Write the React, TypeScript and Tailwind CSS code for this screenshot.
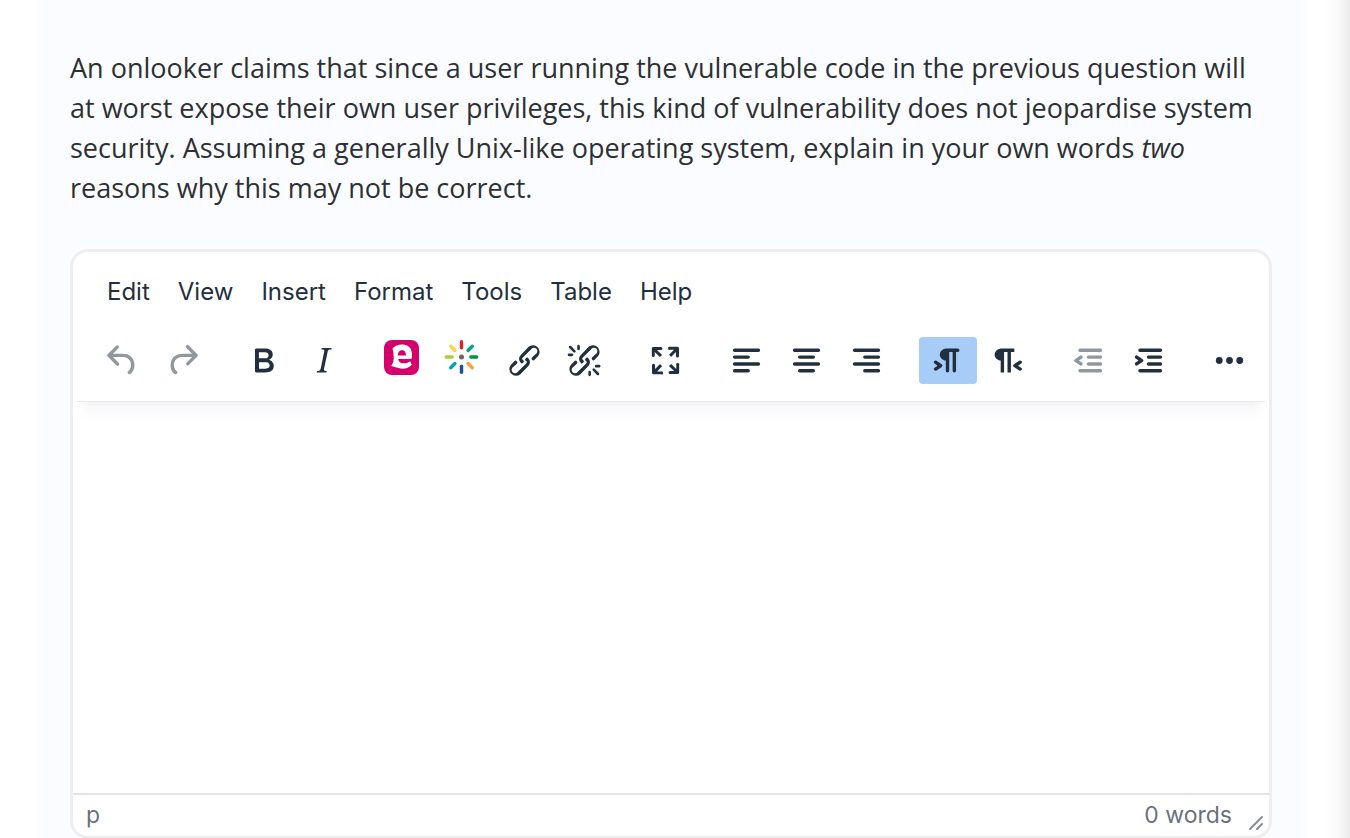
import type { ReactNode } from "react";

const BAR = "M5 5h14a1 1 0 0 1 0 2H5a1 1 0 1 1 0-2Z";
const LINK =
  "M6.2 12.3a1 1 0 0 1 1.4 1.4l-2 2a2 2 0 1 0 2.6 2.8l4.8-4.8a1 1 0 0 0 0-1.4 1 1 0 1 1 1.4-1.3 2.9 2.9 0 0 1 0 4L9.6 20a3.9 3.9 0 0 1-5.5-5.5l2-2Zm11.6-.6a1 1 0 0 1-1.4-1.4l2-2a2 2 0 1 0-2.6-2.8L11 10.3a1 1 0 0 0 0 1.4A1 1 0 1 1 9.6 13a2.9 2.9 0 0 1 0-4L14.4 4a3.9 3.9 0 0 1 5.5 5.5l-2 2Z";
const INDENT_BARS =
  "M7 5h12a1 1 0 0 1 0 2H7a1 1 0 1 1 0-2Zm5 4h7a1 1 0 0 1 0 2h-7a1 1 0 0 1 0-2Zm0 4h7a1 1 0 0 1 0 2h-7a1 1 0 0 1 0-2Zm-5 4h12a1 1 0 0 1 0 2H7a1 1 0 0 1 0-2Z";

const paths = {
  undo: "M6.4 8H12c3.7 0 6.2 2 6.8 5.1.6 2.7-.4 5.6-2.3 6.8a1 1 0 0 1-1-1.8c1.1-.6 1.8-2.7 1.4-4.6-.5-2.1-2.1-3.5-4.9-3.5H6.4l3.3 3.3a1 1 0 1 1-1.4 1.4l-5-5a1 1 0 0 1 0-1.4l5-5a1 1 0 0 1 1.4 1.4L6.4 8Z",
  redo: "M17.6 10H12c-2.8 0-4.4 1.4-4.9 3.5-.4 2 .3 4 1.4 4.6a1 1 0 1 1-1 1.8c-2-1.2-2.9-4.1-2.3-6.8.6-3 3-5.1 6.8-5.1h5.6l-3.3-3.3a1 1 0 1 1 1.4-1.4l5 5a1 1 0 0 1 0 1.4l-5 5a1 1 0 0 1-1.4-1.4l3.3-3.3Z",
  bold: "M7.8 19c-.3 0-.5 0-.6-.2l-.2-.5V5.7c0-.2 0-.4.2-.5l.6-.2h5c1.5 0 2.7.3 3.5 1 .7.6 1.1 1.4 1.1 2.5a3 3 0 0 1-.6 1.9c-.4.6-1 1-1.6 1.2.4.1.9.3 1.3.6s.8.7 1 1.2c.4.4.5 1 .5 1.6 0 1.3-.4 2.3-1.3 3-.8.7-2.1 1-3.8 1H7.8Zm5-8.3c.6 0 1.2-.1 1.6-.5.4-.3.6-.7.6-1.3 0-1.1-.8-1.7-2.3-1.7H9.3v3.5h3.4Zm.5 6c.7 0 1.3-.1 1.7-.4.4-.4.6-.9.6-1.5s-.2-1-.7-1.4c-.4-.3-1-.4-2-.4H9.4v3.8h4Z",
  italic: "m16.7 4.7-.1.9h-.3c-.6 0-1 0-1.4.3-.3.3-.4.6-.5 1.1l-2.1 9.8v.6c0 .5.4.8 1.4.8h.2l-.2.8H8l.2-.8h.2c1.1 0 1.8-.5 2-1.5l2-9.8.1-.5c0-.6-.4-.8-1.4-.8h-.3l.2-.9h5.8Z",
  link: LINK,
  fullscreen:
    "m15.3 10-1.2-1.3 2.9-3h-2.3a.9.9 0 1 1 0-1.7H19c.5 0 .9.4.9.9v4.4a.9.9 0 1 1-1.8 0V7l-2.9 3Zm0 4 3 3v-2.3a.9.9 0 1 1 1.7 0V19c0 .5-.4.9-.9.9h-4.4a.9.9 0 1 1 0-1.8H17l-3-2.9 1.3-1.2ZM10 15.4l-2.9 3h2.3a.9.9 0 1 1 0 1.7H5a.9.9 0 0 1-.9-.9v-4.4a.9.9 0 1 1 1.8 0V17l2.9-3 1.2 1.3ZM8.7 10 5.7 7v2.3a.9.9 0 0 1-1.7 0V5c0-.5.4-.9.9-.9h4.4a.9.9 0 0 1 0 1.8H7l3 2.9-1.3 1.2Z",
  left: BAR + "M5 9h8a1 1 0 0 1 0 2H5a1 1 0 1 1 0-2Zm0 4h14a1 1 0 0 1 0 2H5a1 1 0 0 1 0-2Zm0 4h8a1 1 0 0 1 0 2H5a1 1 0 0 1 0-2Z",
  center: BAR + "M8 9h8a1 1 0 0 1 0 2H8a1 1 0 1 1 0-2ZM5 13h14a1 1 0 0 1 0 2H5a1 1 0 0 1 0-2ZM8 17h8a1 1 0 0 1 0 2H8a1 1 0 0 1 0-2Z",
  right: BAR + "M11 9h8a1 1 0 0 1 0 2h-8a1 1 0 1 1 0-2ZM5 13h14a1 1 0 0 1 0 2H5a1 1 0 0 1 0-2ZM11 17h8a1 1 0 0 1 0 2h-8a1 1 0 0 1 0-2Z",
  ltr: "M11 5h7a1 1 0 0 1 0 2h-1v11a1 1 0 0 1-2 0V7h-2v11a1 1 0 0 1-2 0v-6c-.5 0-1 0-1.4-.3A3.4 3.4 0 0 1 7.8 10a3.3 3.3 0 0 1 0-2.8 3.4 3.4 0 0 1 1.8-1.8L11 5ZM4.4 16.2 6.2 15l-1.8-1.2a1 1 0 0 1 1.2-1.6l3 2a1 1 0 0 1 0 1.6l-3 2a1 1 0 1 1-1.2-1.6Z",
  rtl: "M8 5h8v2h-2v12h-2V7h-2v12H8v-7c-.5 0-1 0-1.4-.3A3.4 3.4 0 0 1 4.8 10a3.3 3.3 0 0 1 0-2.8 3.4 3.4 0 0 1 1.8-1.8L8 5Zm12 11.2a1 1 0 1 1-1.2 1.6l-3-2a1 1 0 0 1 0-1.6l3-2a1 1 0 1 1 1.2 1.6L18.2 15l1.8 1.2Z",
  outdent: INDENT_BARS + "M8.2 13.2a1 1 0 0 1-1.2 1.6l-3-2a1 1 0 0 1 0-1.6l3-2a1 1 0 0 1 1.2 1.6L6.4 12l1.8 1.2Z",
  indent: INDENT_BARS + "M4.4 13.2 6.2 12l-1.8-1.2a1 1 0 0 1 1.2-1.6l3 2a1 1 0 0 1 0 1.6l-3 2a1 1 0 1 1-1.2-1.6Z",
  more: "M6 10a2 2 0 1 0 0 4 2 2 0 0 0 0-4Zm6 0a2 2 0 1 0 0 4 2 2 0 0 0 0-4Zm6 0a2 2 0 1 0 0 4 2 2 0 0 0 0-4Z",
};

function Glyph({ name }: { name: keyof typeof paths }) {
  return (
    <svg viewBox="0 0 24 24" className="size-[41px]" fill="currentColor" fillRule="evenodd" aria-hidden="true">
      <path d={paths[name]} />
    </svg>
  );
}

function UnlinkIcon() {
  return (
    <svg viewBox="0 0 24 24" className="size-[41px]" fill="currentColor" aria-hidden="true">
      <path d={LINK} />
      <path
        d="M3.6 4.1l2.5 2.6M8.5 3.6v1.6M2.9 8.7h1.8M19.9 19.9l-2.500-2.600M15 20.400v-1.600M20.600 15.300h-1.800"
        fill="none"
        stroke="currentColor"
        strokeWidth="1.5"
        strokeLinecap="round"
      />
    </svg>
  );
}

function EchoIcon() {
  return (
    <svg viewBox="0 0 41 41" className="size-[41px]" aria-hidden="true">
      <rect width="35" height="35" rx="8" fill="#d6006d" />
      <path
        d="M8.500 8.500C11 5.500 14.500 4.300 18.500 4.400C24.500 4.500 28 8.500 28 14.500V17C28 18.300 27.500 18.900 26.300 18.900H14.200C14.600 21.900 16.800 23.400 19.800 23.300C22.500 23.200 24.500 22.300 26.200 21.200L27.800 24.800C25.200 27.600 22.500 28.700 18.500 28.700C14 28.700 10.500 26.500 7.300 26C9.300 23 9.900 20 9.700 17.300C9.600 14 9.300 11.500 8.500 8.500ZM13.800 15.600H22C22 12 20.700 9.900 18 9.900C15.500 9.900 13.900 12 13.800 15.600Z"
        fill="#fff"
        fillRule="evenodd"
      />
    </svg>
  );
}

const rays = [
  { color: "#d8232a", angle: 0 },
  { color: "#00a58e", angle: 45 },
  { color: "#009447", angle: 90 },
  { color: "#f9a13a", angle: 135 },
  { color: "#1b4f9c", angle: 180 },
  { color: "#00a0c6", angle: 225 },
  { color: "#a9cf38", angle: 270 },
  { color: "#fdd23e", angle: 315 },
];

function MediaIcon() {
  return (
    <svg viewBox="0 0 41 41" className="size-[41px]" aria-hidden="true">
      <g transform="translate(17.5 17)" strokeWidth="3.4" strokeLinecap="round">
        {rays.map((ray) => (
          <path key={ray.angle} d="M0 -15.2V-9.3" stroke={ray.color} transform={`rotate(${ray.angle})`} />
        ))}
        <circle r="2.5" fill="#6b6467" />
      </g>
    </svg>
  );
}

type Tool = { label: string; icon: ReactNode; disabled?: boolean; active?: boolean };

const groups: Tool[][] = [
  [
    { label: "Undo", icon: <Glyph name="undo" />, disabled: true },
    { label: "Redo", icon: <Glyph name="redo" />, disabled: true },
  ],
  [
    { label: "Bold", icon: <Glyph name="bold" /> },
    { label: "Italic", icon: <Glyph name="italic" /> },
  ],
  [
    { label: "Embed recording", icon: <EchoIcon /> },
    { label: "Embed media", icon: <MediaIcon /> },
    { label: "Insert link", icon: <Glyph name="link" /> },
    { label: "Remove link", icon: <UnlinkIcon /> },
  ],
  [{ label: "Fullscreen", icon: <Glyph name="fullscreen" /> }],
  [
    { label: "Align left", icon: <Glyph name="left" /> },
    { label: "Align center", icon: <Glyph name="center" /> },
    { label: "Align right", icon: <Glyph name="right" /> },
  ],
  [
    { label: "Left to right", icon: <Glyph name="ltr" />, active: true },
    { label: "Right to left", icon: <Glyph name="rtl" /> },
  ],
  [
    { label: "Decrease indent", icon: <Glyph name="outdent" />, disabled: true },
    { label: "Increase indent", icon: <Glyph name="indent" /> },
  ],
  [{ label: "More", icon: <Glyph name="more" /> }],
];

const menus = ["Edit", "View", "Insert", "Format", "Tools", "Table", "Help"];

function ToolButton({ tool }: { tool: Tool }) {
  return (
    <button
      type="button"
      aria-label={tool.label}
      aria-pressed={tool.active}
      disabled={tool.disabled}
      className={`flex h-[47px] w-[58px] items-center justify-center rounded disabled:text-[#222f3e]/50 ${
        tool.active ? "bg-[#a6ccf7]" : ""
      }`}
    >
      {tool.icon}
    </button>
  );
}

function Editor() {
  return (
    <section
      aria-label="Answer editor"
      className="flex flex-col overflow-hidden rounded-[18px] border-3 border-[#eeeeee] bg-white font-['Inter',sans-serif] text-[#222f3e]"
    >
      <header>
        <nav aria-label="Editor menu" className="flex gap-7 px-[34px] pt-6 text-[24px] leading-8">
          {menus.map((menu) => (
            <button key={menu} type="button">
              {menu}
            </button>
          ))}
        </nav>
        <div role="toolbar" aria-label="Formatting" className="flex justify-between pt-[29px] pr-[10px] pb-[17px] pl-5">
          {groups.map((group) => (
            <div key={group[0].label} className="flex gap-0.5">
              {group.map((tool) => (
                <ToolButton key={tool.label} tool={tool} />
              ))}
            </div>
          ))}
        </div>
      </header>
      <div className="mx-1 flex h-5 border-t border-[#e9e9eb] bg-linear-to-b from-[#f4f4f6] via-[#fbfbfc] via-50% to-white">
        <div className="w-3 bg-linear-to-r from-white to-transparent" />
        <div className="ml-auto w-3 bg-linear-to-l from-white to-transparent" />
      </div>
      <textarea aria-label="Answer" className="block h-[372px] w-full resize-none px-5 outline-none" />
      <footer className="flex items-center border-t-2 border-[#e3e3e3] pl-[13px] text-[23px] leading-[41px] text-[#222f3e]/70">
        <span>p</span>
        <span className="ml-auto">0 words</span>
        <svg viewBox="0 0 24 24" className="ml-[13px] size-6 self-end" fill="none" stroke="#8a8d93" strokeWidth="2" strokeLinecap="round" aria-hidden="true">
          <path d="M5 17L17 5M12 17L17 12" />
        </svg>
      </footer>
    </section>
  );
}

export default function App() {
  return (
    <div className="flex min-h-screen bg-white">
      <main className="ml-[38px] flex-1 bg-[#fbfcff] pr-[34px] pl-8">
        <p className="pt-12 pb-[41px] font-['Open_Sans',sans-serif] text-[27px] leading-10 text-[#2d3033]">
          An onlooker claims that since a user running the vulnerable code in the previous question will at worst expose
          their own user privileges, this kind of vulnerability does not jeopardise system security. Assuming a generally
          Unix-like operating system, explain in your own words <em>two</em> reasons why this may not be correct.
        </p>
        <Editor />
      </main>
      <div className="w-11 bg-linear-to-r from-white from-40% via-[#fafafa] via-70% to-[#ececec]" />
    </div>
  );
}
